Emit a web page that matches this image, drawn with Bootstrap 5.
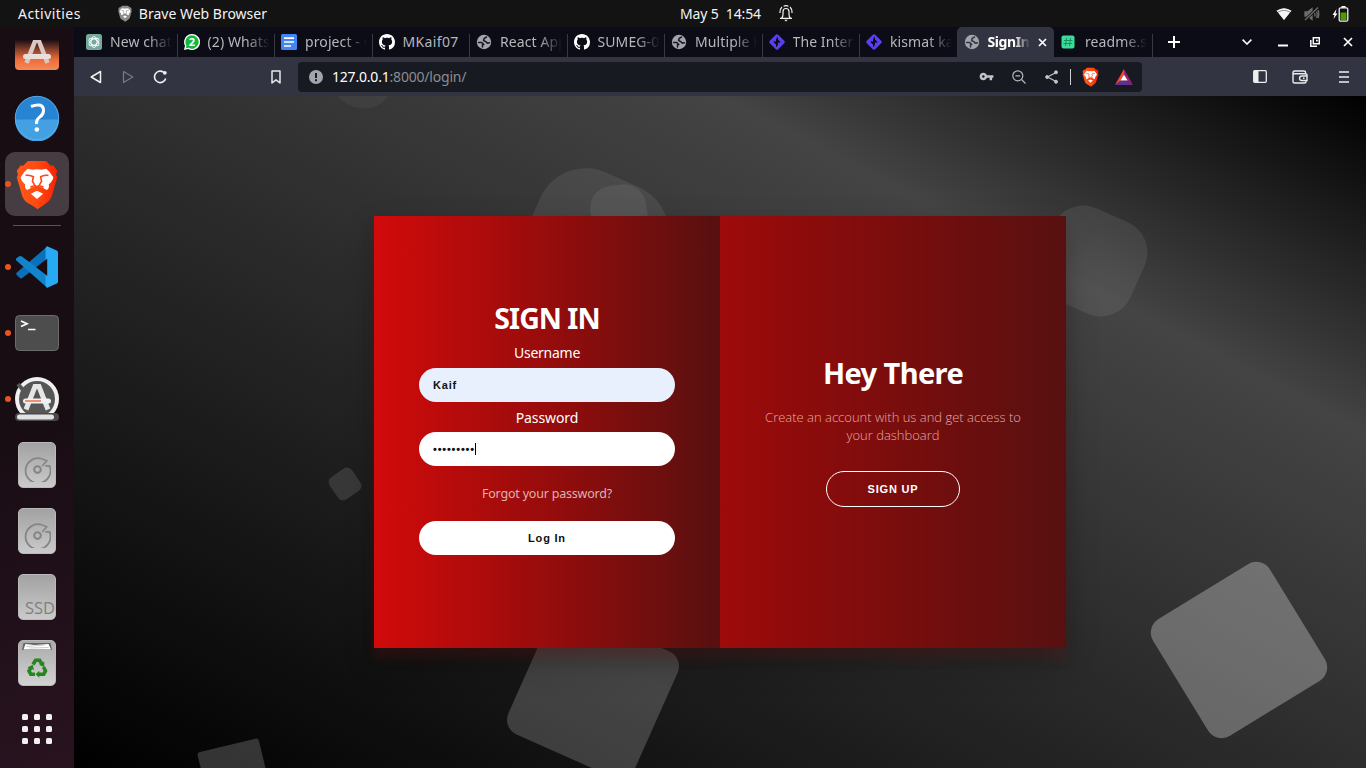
<!DOCTYPE html>
<html lang="en">
<head>
<meta charset="utf-8">
<meta name="viewport" content="width=device-width, initial-scale=1">
<title>SignIn</title>
<link href="https://cdn.jsdelivr.net/npm/bootstrap@5.3.0/dist/css/bootstrap.min.css" rel="stylesheet">
<style>
body{font-family:"Noto Sans","Open Sans",sans-serif;font-size:14px;line-height:1.3;color:#fff;background:#000}
svg{display:block;flex:none}
.desktop{width:1366px;height:768px}
.sysbar{height:27px;background:#131313;color:#f2f2f2;flex:none}
.sysbar span{line-height:27px;white-space:pre}
.dock{width:74px;flex:none;background:linear-gradient(160deg,#190d14 55%,#28131f)}
.dock-item{height:66px;flex:none}
.dock-first{height:58px;padding-top:13px}
.dock-on{width:64px;height:64px;border-radius:10px;background:#463d42}
.dock-dot{left:5px;top:50%;width:6px;height:6px;margin-top:-3px;border-radius:50%;background:#e95420}
.dock-rule{width:48px;height:1px;background:#5d5158;margin:8px 0}
.drive{width:38px;height:46px;margin-top:-1px;border-radius:5px;background:linear-gradient(#a2a2a2,#cacaca);border:1px solid #b9b9b9}
.tabstrip{height:30px;background:#0c0c17;padding-left:5px;flex:none}
.tab-cell{width:97.5px;height:30px;padding-left:7px;flex:none;color:#b6b6bb}
.tab-cell::after{content:"";position:absolute;right:-1px;top:7px;width:1px;height:23px;background:#38383f}
.tab-cell.on::after,.tab-cell.pre::after{display:none}
.tab-cell.on{background:#323441;border-radius:5px 5px 0 0;color:#fff;font-weight:700}
.tab-text{margin-left:8px;width:62px;line-height:30px;overflow:hidden;white-space:nowrap;font-size:14px;letter-spacing:.1px;-webkit-mask-image:linear-gradient(90deg,#000 62%,transparent);mask-image:linear-gradient(90deg,#000 62%,transparent)}
.on .tab-text{width:42px;letter-spacing:-.4px}
.toolbar{height:39px;background:#323441;flex:none}
.omni{width:844px;height:30px;border-radius:4px;background:#181a21}
.omni-text{color:#8a8c92;font-size:14px;line-height:30px;letter-spacing:-.2px}
.page-bg{background:linear-gradient(to bottom left,#000 0%,#444 25%,#000 100%)}
.float-sq{position:absolute;left:var(--x);top:var(--y);width:var(--s);height:var(--s);border-radius:var(--r);transform:translate(-50%,-50%) rotate(var(--a));background:rgba(255,255,255,var(--o))}
.auth{width:692px;height:432px;margin-top:120px;margin-left:300px;z-index:1;box-shadow:0 14px 28px rgba(0,0,0,.25),0 10px 10px rgba(150,25,25,.22)}
.pane{width:346px;padding:0 45px}
.pane-in{padding-top:84px;background:linear-gradient(90deg,#d20a0a,#970c0c 50%,#571010)}
.pane-up{padding-top:139px;background:linear-gradient(90deg,#9e0a0a,#571010)}
.pane h1{font-size:29px;line-height:36px;font-weight:700;margin:0;letter-spacing:-.6px}
.pane-in h1{font-size:28.500px;letter-spacing:-1px}
.pane label{display:block;font-size:14px;line-height:34px;height:32px;letter-spacing:-.25px}
.pane label[for=pass]{line-height:31px;height:30px;letter-spacing:-.1px}
.field,.pill{height:34px;border:0;border-radius:20px;font:bold 11px "Liberation Sans",sans-serif;letter-spacing:.8px;padding:0 14px;color:#111;background:#fff}
.field:focus{box-shadow:none}
.field.filled{background:#e8f0fe}
.caret{left:56px;top:11px;width:1px;height:12px;background:#000}
.forgot{display:block;line-height:55px;font-size:12.500px;letter-spacing:-.2px;color:#dcb3b3;text-decoration:none}
.pitch{font-family:"Open Sans","Noto Sans",sans-serif;font-weight:300;font-size:13px;line-height:18px;color:#e0aaaa;margin:17px -5px 27px}
.pill-line{width:134px;height:36px;border:1px solid #fff;background:transparent;color:#fff}
</style>
</head>
<body>
<svg width="0" height="0" class="position-absolute">
<defs>
<linearGradient id="lionG"><stop offset="0" stop-color="#ff5a18"/><stop offset=".5" stop-color="#ff4a12"/><stop offset="1" stop-color="#f92203"/></linearGradient>
<linearGradient id="bagG" x2="0" y2="1"><stop offset="0" stop-color="#1d0e14"/><stop offset=".35" stop-color="#8f452c"/><stop offset=".65" stop-color="#ee6c3c"/><stop offset="1" stop-color="#f58a55"/></linearGradient>
<symbol id="lion" viewBox="48 390 128 156">
<path fill="var(--sc,url(#lionG))" d="M84 396h56l14 15 8-1 12 16-4 12 4 8-17 58q-4 12-14 19-31 23-31 20t-31-20q-10-7-14-19l-17-58 4-8-4-12 12-16 8 1z"/>
<path fill="#fff" d="M84 420l14 3q14-4 28 0l14-3 10 9 12 17q0 9-14 22 3 12-6 17l-13-7-17-7-17 7-13 7q-9-5-6-17-14-13-14-22l12-17zM112 487l19 9-19 16-19-16z"/>
<path fill="none" stroke="var(--lc,#ff4614)" stroke-width="5" stroke-linejoin="round" d="M77 440q12-1 24 4l-3 14 7 13-13 5M147 440q-12-1-24 4l3 14-7 13 13 5M105 471l7 5 7-5"/>
</symbol>
<symbol id="globe" viewBox="0 0 16 16"><circle cx="8" cy="8" r="7.200" fill="#a3a5ac"/><path fill="none" stroke="var(--gb,#181824)" stroke-width="1.500" stroke-linejoin="round" stroke-linecap="round" d="M2.500 8.500h3.300l2 2h-1.300v2.500M10.500 3L8.200 4.300 7.600 6.500l2.500 1.300 1.200 1.500 2.200-.6"/></symbol>
<symbol id="octo" viewBox="0 0 16 16"><path fill="#fff" d="M8 0C3.58 0 0 3.58 0 8c0 3.54 2.29 6.53 5.47 7.59.4.07.55-.17.55-.38 0-.19-.01-.82-.01-1.49-2.01.37-2.53-.49-2.69-.94-.09-.23-.48-.94-.82-1.13-.28-.15-.68-.52-.01-.53.63-.01 1.08.58 1.23.82.72 1.21 1.87.87 2.33.66.07-.52.28-.87.51-1.07-1.78-.2-3.64-.89-3.64-3.95 0-.87.31-1.59.82-2.15-.08-.2-.36-1.02.08-2.12 0 0 .67-.21 2.2.82.64-.18 1.32-.27 2-.27s1.36.09 2 .27c1.53-1.04 2.2-.82 2.2-.82.44 1.1.16 1.92.08 2.12.51.56.82 1.27.82 2.15 0 3.07-1.87 3.75-3.65 3.95.29.25.54.73.54 1.48 0 1.07-.01 1.93-.01 2.2 0 .21.15.46.55.38A8.01 8.01 0 0 0 16 8c0-4.42-3.58-8-8-8"/></symbol>
<symbol id="diamond" viewBox="0 0 16 16"><path fill="none" stroke="#5a3ff2" stroke-width="3.400" stroke-linejoin="round" d="M8 2l6 6-6 6-6-6z"/><path stroke="#5a3ff2" stroke-width="1.600" d="M6.200 3v4.500M9.800 13V8.500"/><path stroke="#0c0c17" stroke-width="1.200" d="M8.400 3.200v3M7.600 12.800v-3"/></symbol>
<symbol id="disk" viewBox="0 0 26 26"><g fill="none" stroke="#858585" stroke-width="1.700"><path d="M17 3.600A12 12 0 1 0 24.600 10.500H20.500"/><path d="M17 3.600L22 5.500l-4.500 5.200" stroke-width="1.500"/><circle cx="13" cy="14" r="3.200" stroke-width="2"/></g></symbol>
</defs>
</svg>

<div class="desktop d-flex flex-column overflow-hidden position-relative">
  <header class="sysbar d-flex align-items-center position-relative">
    <span style="margin-left:18px;letter-spacing:.45px">Activities</span>
    <svg width="14" height="17" style="margin-left:37px;--sc:#8b8b8b;--lc:#777"><use href="#lion"/></svg>
    <span class="flex-grow-1" style="margin-left:7px">Brave Web Browser</span>
    <div class="position-absolute d-flex align-items-center" style="left:680px">
      <span style="letter-spacing:-.12px">May 5  14:54</span>
      <svg style="margin-left:18px" width="14" height="17" viewBox="0 0 14 17" fill="none" stroke="#f2f2f2" stroke-width="1.200"><path d="M1 13.400h12M2.600 13q1.400-1.300 1.400-3.500V6.500a3 3 0 0 1 6 0v3q0 2.200 1.400 3.500M1 8Q.8 4 3 2M13 8q.2-4-2-6M4.600 1.300a5 5 0 0 1 4.800 0"/><path d="M5.200 14.800h3.600L7 16.500z" fill="#f2f2f2" stroke="none"/></svg>
    </div>
    <div class="d-flex align-items-center" style="gap:12px;margin-right:17px">
      <svg width="16" height="12" viewBox="0 0 16 12"><path fill="#777" d="M8 12L.5 2.800q7.500-5 15 0z"/><path fill="#f4f4f4" d="M8 12L2 4.600Q8 1 14 4.600zM.5 2.800q7.500-5 15 0l-1 1.200Q8 0 1.500 4z"/></svg>
      <svg width="16" height="16" viewBox="0 0 16 16" fill="none" stroke="#6c6c6c" stroke-width="1.300"><path fill="#6c6c6c" d="M1 6h2.500L8 2.500v11L3.500 10H1z"/><path stroke="#131313" stroke-width="3" d="M1 14L14 1.500"/><path d="M1 14L14 1.500M10.500 7q1 2 0 3.500M12.500 5.500q1.500 3 0 6.500M14 4q1.500 4 0 8"/></svg>
      <svg width="17" height="16" viewBox="0 0 17 16"><path fill="#fff" d="M4.500 3L.5 9h2L1.500 13 5.500 7.500H3.500zM9.500 0h4v2h-4z"/><rect x="7.200" y="1.800" width="8.600" height="13.400" rx="1.500" fill="#131313" stroke="#f2f2f2" stroke-width="1.300"/><path fill="#4e9a06" d="M8.500 6.500h6v7.500h-6z"/></svg>
    </div>
  </header>

  <div class="d-flex flex-grow-1">
    <nav class="dock d-flex flex-column align-items-center">
      <div class="dock-item dock-first"><svg width="46" height="31" viewBox="0 0 46 31"><path fill="url(#bagG)" d="M1 0h44v26q0 4-4 4H5q-4 0-4-4z"/><path stroke="#d8c9c4" stroke-width="4.500" fill="none" d="M21 0h4M21.500 0l-9 23M24.500 0l9 23"/><rect x="9" y="14" width="28" height="5" rx="2.500" fill="#e9dedb"/></svg></div>
      <div class="dock-item d-flex align-items-center"><svg width="46" height="46" viewBox="0 0 46 46"><circle cx="23" cy="23" r="22" fill="#2684d3"/><path fill="#43a0e2" d="M1 24.500h44a22 22 0 0 1-44 0z"/><circle cx="23" cy="23" r="21.700" fill="none" stroke="#62b4eb" stroke-width=".8"/><path fill="none" stroke="#fff" stroke-width="3" d="M17 11.500q12.500-4.500 12.500 4 0 4-3.700 6.500t-3.200 7"/><circle cx="22.800" cy="34.500" r="2.300" fill="#fff"/></svg></div>
      <div class="dock-item w-100 d-flex align-items-center justify-content-center position-relative"><div class="dock-on d-flex align-items-center justify-content-center"><svg width="42" height="51"><use href="#lion"/></svg></div><i class="dock-dot position-absolute"></i></div>
      <div class="dock-rule"></div>
      <div class="dock-item w-100 d-flex align-items-center justify-content-center position-relative"><svg width="44" height="44" viewBox="44 650 134 134"><path fill="#0a70ba" d="M48 740l10 10q4 4 9 0l76-58v-38L48 735z"/><path fill="#1184cc" d="M48 697q-3-4 0-7l9-6q4-2 8 1l78 58v38z"/><path fill="#27a9f3" d="M142 654l29 13q4 2 4 6v88q0 4-4 6l-29 13q-4-1-5-6V660q1-5 5-6z"/><path fill="#190d14" d="M142 692v52l-33-26z"/></svg><i class="dock-dot position-absolute"></i></div>
      <div class="dock-item w-100 d-flex align-items-center justify-content-center position-relative"><svg width="46" height="38" viewBox="0 0 46 38"><rect x="1.500" y="1.500" width="43" height="35" rx="4" fill="#4d4d4d" stroke="#6c6c6c"/><path fill="none" stroke="#fff" stroke-width="1.700" d="M7 7l6 2.800L7 12.500M14 15.500h7.500"/></svg><i class="dock-dot position-absolute"></i></div>
      <div class="dock-item w-100 d-flex align-items-center justify-content-center position-relative"><svg width="46" height="46" viewBox="0 0 46 46"><circle cx="23" cy="23" r="22" fill="#f0f0f0"/><circle cx="23" cy="23" r="18" fill="#565656"/><path stroke="#565656" stroke-width="4" d="M4 8l5 6"/><path fill="none" stroke="#e6e6e6" stroke-width="5" d="M12 33.500l9-23h4l9 23"/><rect x="9" y="22.500" width="28" height="5" rx="2.500" fill="#f1f1f1"/><path stroke="#e95420" stroke-width="1.200" d="M11 25h16"/><rect x="1" y="37" width="44" height="8" rx="4" fill="#4a4a4a"/><rect x="3" y="38.500" width="37" height="5" rx="2.500" fill="#e2e2e2"/></svg><i class="dock-dot position-absolute"></i></div>
      <div class="dock-item d-flex align-items-center"><div class="drive"><svg class="mx-auto" style="margin-top:12px" width="27" height="27"><use href="#disk"/></svg></div></div>
      <div class="dock-item d-flex align-items-center"><div class="drive"><svg class="mx-auto" style="margin-top:12px" width="27" height="27"><use href="#disk"/></svg></div></div>
      <div class="dock-item d-flex align-items-center"><div class="drive d-flex align-items-end justify-content-end" style="font-size:16.500px;line-height:22px;color:#808080;font-family:'Open Sans'">SSD</div></div>
      <div class="dock-item d-flex align-items-center"><div class="drive" style="background:linear-gradient(#aaa,#d2d2d2)"><svg width="36" height="43" viewBox="0 0 35 43"><path fill="#666" d="M4 2h27l1.500 7h-30z"/><path fill="#fff" d="M4 8.500l2-5.500 9 1 14-1 2.500 5.500z"/><path fill="none" stroke="#aaa" stroke-width=".6" d="M7 5.500l18-1.500M10 7l19-.5"/>
      <g fill="none" stroke="#25851f" stroke-width="3.600"><path d="M13.500 23.500l2.600-4.200h4l2.200 3.700M24 26l2 4-1.800 3.200h-5.700M15.500 33.200h-4.200L9.500 30l2-3.700"/></g><path fill="#25851f" d="M24.800 20.500v5.500l-5.200-2zM19.800 29.700v7l-3.800-3.500zM8 26.500l5.200-2.800 1.300 5.200z"/></svg></div></div>
      <div class="dock-item d-flex align-items-center"><svg width="32" height="32" viewBox="0 0 32 32" fill="#f3f1f0"><rect x="1" y="1" width="6" height="6" rx="1.500"/><rect x="13" y="1" width="6" height="6" rx="1.500"/><rect x="25" y="1" width="6" height="6" rx="1.500"/><rect x="1" y="13" width="6" height="6" rx="1.500"/><rect x="13" y="13" width="6" height="6" rx="1.500"/><rect x="25" y="13" width="6" height="6" rx="1.500"/><rect x="1" y="25" width="6" height="6" rx="1.500"/><rect x="13" y="25" width="6" height="6" rx="1.500"/><rect x="25" y="25" width="6" height="6" rx="1.500"/></svg></div>
    </nav>

    <div class="d-flex flex-column flex-grow-1">
      <div class="tabstrip d-flex">
        <div class="tab-cell position-relative d-flex align-items-center"><svg width="16" height="16" viewBox="0 0 16 16"><rect width="16" height="16" rx="2.500" fill="#74aa9c"/><g fill="none" stroke="#fff" stroke-width=".9"><ellipse cx="8" cy="8" rx="3" ry="5.500"/><ellipse cx="8" cy="8" rx="3" ry="5.500" transform="rotate(60 8 8)"/><ellipse cx="8" cy="8" rx="3" ry="5.500" transform="rotate(120 8 8)"/></g></svg><div class="tab-text">New chat</div></div>
        <div class="tab-cell position-relative d-flex align-items-center"><svg width="16" height="16" viewBox="0 0 16 16"><path fill="#fff" d="M8 0a8 8 0 1 1-3.800 15L0 16l1-4.200A8 8 0 0 1 8 0z"/><path fill="#12b83f" d="M8 1.300a6.700 6.700 0 1 1-3.400 12.500l-2.800.5.600-2.800A6.700 6.700 0 0 1 8 1.300z"/><text x="8" y="12" text-anchor="middle" font-size="11" font-weight="700" fill="#fff">2</text></svg><div class="tab-text">(2) Whats</div></div>
        <div class="tab-cell position-relative d-flex align-items-center"><svg width="16" height="16" viewBox="0 0 16 16"><rect width="16" height="16" rx="1.500" fill="#4285f4"/><path stroke="#fff" stroke-width="1.700" d="M3 4.200h10M3 8h10M3 12h7"/></svg><div class="tab-text">project - G</div></div>
        <div class="tab-cell position-relative d-flex align-items-center"><svg width="16" height="16"><use href="#octo"/></svg><div class="tab-text" style="-webkit-mask:none;mask:none;letter-spacing:.35px">MKaif07</div></div>
        <div class="tab-cell position-relative d-flex align-items-center"><svg width="16" height="16"><use href="#globe"/></svg><div class="tab-text">React App</div></div>
        <div class="tab-cell position-relative d-flex align-items-center"><svg width="16" height="16"><use href="#octo"/></svg><div class="tab-text">SUMEG-0</div></div>
        <div class="tab-cell position-relative d-flex align-items-center"><svg width="16" height="16"><use href="#globe"/></svg><div class="tab-text">Multiple F</div></div>
        <div class="tab-cell position-relative d-flex align-items-center"><svg width="16" height="16"><use href="#diamond"/></svg><div class="tab-text">The Inter</div></div>
        <div class="tab-cell pre position-relative d-flex align-items-center"><svg width="16" height="16"><use href="#diamond"/></svg><div class="tab-text">kismat ka</div></div>
        <div class="tab-cell on position-relative d-flex align-items-center"><svg width="16" height="16" style="--gb:#323441"><use href="#globe"/></svg><div class="tab-text">SignIn</div><svg style="margin-left:8px" width="9" height="9" viewBox="0 0 9 9" stroke="#fff" stroke-width="1.700"><path d="M1 1l7 7M8 1L1 8"/></svg></div>
        <div class="tab-cell position-relative d-flex align-items-center"><svg width="14" height="14" viewBox="0 0 14 14"><rect width="13" height="13" x=".5" y=".5" rx="2" fill="#3bdc9a"/><path stroke="#118a5c" stroke-width=".9" fill="none" d="M5.500 3l-1 8M9.500 3l-1 8M3 5.500h8.500M2.500 8.500H11"/></svg><div class="tab-text" style="margin-left:10px">readme.s</div></div>
        <svg class="ms-3 align-self-center" width="12" height="12" viewBox="0 0 12 12" stroke="#fff" stroke-width="2"><path d="M6 0v12M0 6h12"/></svg>
        <div class="d-flex align-items-center ms-auto" style="gap:24px;margin-right:13px">
          <svg width="10" height="6" viewBox="0 0 10 6" fill="none" stroke="#fff" stroke-width="1.600"><path d="M.6.6L5 5 9.400.6"/></svg>
          <svg style="margin-left:2px" width="10" height="10"><path fill="#fff" d="M0 7.500h10v2H0z"/></svg>
          <svg style="margin-left:-2px" width="10" height="10" viewBox="0 0 10 10" fill="none" stroke="#fff" stroke-width="1.500"><path d="M3.300.8h6v6h-6zM.8 3v6.300H7M6 3.500h1v1"/></svg>
          <svg style="margin-left:-1px" width="10" height="10" viewBox="0 0 10 10" stroke="#fff" stroke-width="1.700"><path d="M1 1l8 8M9 1L1 9"/></svg>
        </div>
      </div>

      <div class="toolbar d-flex align-items-center">
        <svg style="margin-left:16px" width="12" height="14" viewBox="0 0 12 14" fill="none" stroke="#f0f0f0" stroke-width="1.500" stroke-linejoin="round"><path d="M10.500 1.500v11L1.200 7z"/></svg>
        <svg style="margin-left:20px" width="12" height="14" viewBox="0 0 12 14" fill="none" stroke="#777985" stroke-width="1.300" stroke-linejoin="round"><path d="M1.500 1.500v11L10.800 7z"/></svg>
        <svg style="margin-left:19px" width="15" height="14" viewBox="0 0 15 14" fill="none" stroke="#f0f0f0" stroke-width="1.600"><path d="M10.500 2.200A5.700 5.700 0 1 0 12.700 8.500"/><circle cx="11.800" cy="2.800" r="1.900" fill="#f0f0f0" stroke="none"/></svg>
        <svg style="margin-left:103px" width="10" height="14" viewBox="0 0 10 14" fill="none" stroke="#e8e8e8" stroke-width="1.500" stroke-linejoin="round"><path d="M1 1h8v12L5 9.800 1 13z"/></svg>
        <div class="omni d-flex align-items-center" style="margin-left:17px">
          <svg style="margin-left:11px" width="14" height="14" viewBox="0 0 14 14"><circle cx="7" cy="7" r="7" fill="#a3a5ac"/><path fill="#181a21" d="M6 3h2v5H6zM6 9.300h2v2H6z"/></svg>
          <span class="omni-text flex-grow-1" style="margin-left:9px"><span class="text-white">127.0.0.1</span>:8000/login/</span>
          <svg width="15" height="15" viewBox="0 0 24 24"><path fill="#c4c5c9" d="M12.650 10C11.830 7.670 9.610 6 7 6c-3.310 0-6 2.690-6 6s2.690 6 6 6c2.610 0 4.830-1.670 5.650-4H17v4h4v-4h2v-4H12.650zM7 14c-1.100 0-2-.9-2-2s.9-2 2-2 2 .9 2 2-.9 2-2 2z"/></svg>
          <svg style="margin-left:18px" width="14" height="14" viewBox="0 0 14 14" fill="none" stroke="#b5b6bb" stroke-width="1.200"><circle cx="5.800" cy="5.800" r="5"/><path d="M9.500 9.500l4 4M3.500 5.800h4.600"/></svg>
          <svg style="margin-left:19px" width="13" height="14" viewBox="0 0 13 14" fill="#c4c5c9" stroke="#c4c5c9"><path fill="none" stroke-width="1.200" d="M11 2.500L2.500 7l8.500 4.500"/><circle cx="11" cy="2.300" r="1.500"/><circle cx="2.200" cy="7" r="1.500"/><circle cx="11" cy="11.700" r="1.500"/></svg>
          <span style="width:1px;height:16px;background:#d0d0d4;margin-left:12px"></span>
          <svg style="margin-left:11px" width="17" height="20"><use href="#lion"/></svg>
          <svg style="margin:0 9px 0 16px" width="18" height="16" viewBox="0 0 18 16"><path fill="#ff4724" d="M9 0L0 16l5.500-4L9 5z"/><path fill="#9e1f63" d="M9 0l9 16-5.500-4L9 5z"/><path fill="#662d91" d="M0 16h18l-5.500-4.500h-7z"/><path fill="#fff" d="M9 5.500l3.600 6H5.400z"/></svg>
        </div>
        <svg style="margin-left:111px" width="14" height="13" viewBox="0 0 14 13"><rect x=".7" y=".7" width="12.600" height="11.600" rx="1" fill="none" stroke="#eee" stroke-width="1.300"/><path fill="#eee" d="M1 1h4.500v11H1z"/></svg>
        <svg style="margin-left:25px" width="16" height="14" viewBox="0 0 16 14" fill="none" stroke="#ececec" stroke-width="1.400"><path d="M13.500 3.500V2.200Q13.500 1 12 1H2.500Q1 1 1 2.500v9Q1 13 2.500 13h10Q14 13 14 11.500V11M1 2.500q0 1.300 1.500 1.300h10.500q2 0 2 1.500M9.500 6H15v4.500H9.800a2.200 2.200 0 0 1 0-4.500M11 8.300h1.500"/></svg>
        <svg style="margin-left:31px" width="10" height="12" viewBox="0 0 10 12" stroke="#eee" stroke-width="1.500"><path d="M0 1h10M0 6h10M0 11h10"/></svg>
      </div>

      <main class="page-bg flex-grow-1 position-relative overflow-hidden d-flex align-items-start">
        <i class="float-sq" style="--x:289px;--y:-17px;--s:58px;--r:26px;--a:10deg;--o:.045"></i>
        <i class="float-sq" style="--x:520.500px;--y:145.500px;--s:136px;--r:50px;--a:24deg;--o:.08"></i>
        <i class="float-sq" style="--x:545px;--y:117px;--s:56px;--r:22px;--a:-9deg;--o:.07"></i>
        <i class="float-sq" style="--x:1018px;--y:165px;--s:100px;--r:33px;--a:24deg;--o:.08"></i>
        <i class="float-sq" style="--x:271px;--y:388px;--s:27px;--r:6px;--a:-35deg;--o:.12"></i>
        <i class="float-sq" style="--x:519px;--y:597px;--s:138px;--r:16px;--a:24deg;--o:.19"></i>
        <i class="float-sq" style="--x:160.500px;--y:680px;--s:63px;--r:3px;--a:-13.500deg;--o:.19"></i>
        <i class="float-sq" style="--x:1165px;--y:554px;--s:137px;--r:16px;--a:58.500deg;--o:.29"></i>

        <section class="auth d-flex position-relative">
          <form class="pane pane-in text-center">
            <h1>SIGN IN</h1>
            <label for="user">Username</label>
            <input id="user" class="form-control field filled" value="Kaif">
            <label for="pass">Password</label>
            <div class="position-relative"><input id="pass" type="password" class="form-control field" value="kaif12345"><i class="caret position-absolute"></i></div>
            <a class="forgot" href="#">Forgot your password?</a>
            <button type="button" class="btn pill w-100">Log In</button>
          </form>
          <div class="pane pane-up text-center">
            <h1>Hey There</h1>
            <p class="pitch">Create an account with us and get access to your dashboard</p>
            <button type="button" class="btn pill pill-line">SIGN UP</button>
          </div>
        </section>
      </main>
    </div>
  </div>
</div>
<script src="https://cdn.jsdelivr.net/npm/bootstrap@5.3.0/dist/js/bootstrap.bundle.min.js"></script>
</body>
</html>
